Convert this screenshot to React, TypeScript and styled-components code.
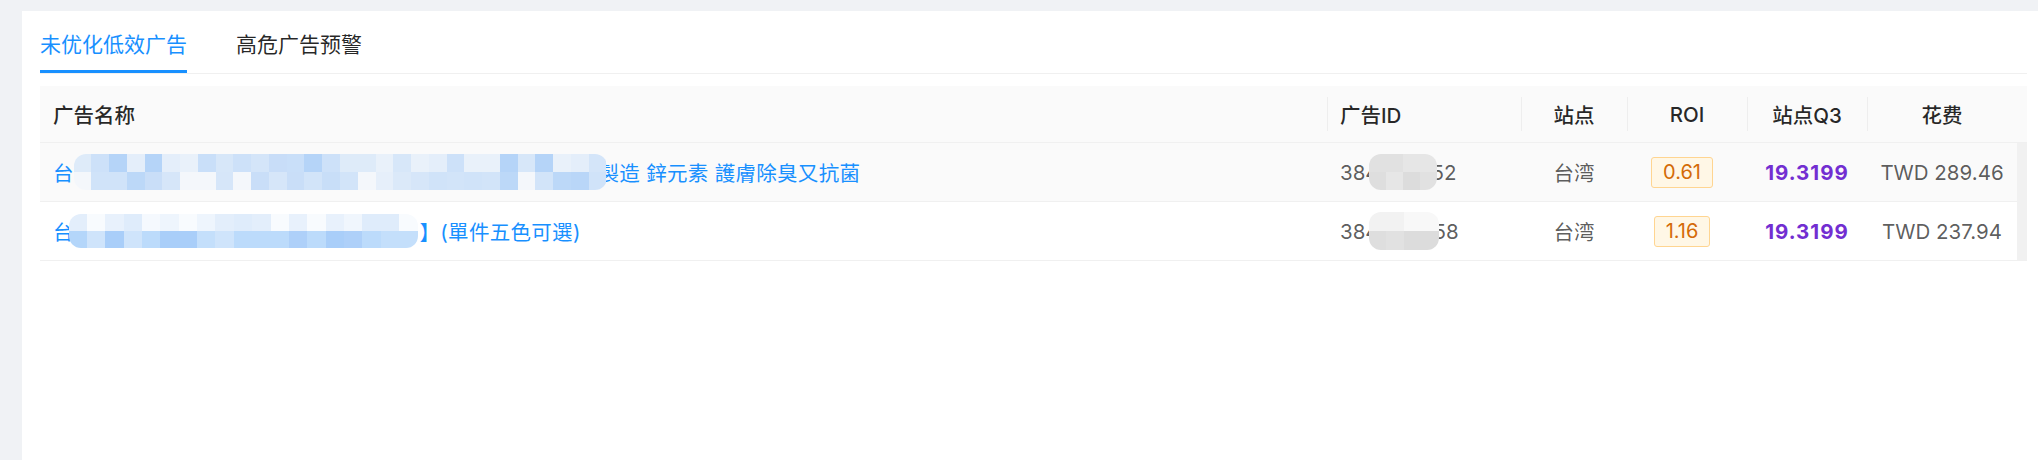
import styled, { createGlobalStyle } from 'styled-components';

const GlobalStyle = createGlobalStyle`
  html, body {
    margin: 0;
    padding: 0;
    background: #f0f2f5;
  }
  body {
    font-family: "Inter", "Noto Sans CJK SC", "Noto Sans CJK TC", sans-serif;
    -webkit-font-smoothing: antialiased;
  }
`;

const GRID = '1287px 194px 106px 120px 120px 150px';

const BLUE_TOP = ['#b5d4f8', '#c9dff9', '#cde1f9', '#e4eefa', '#deebf9', '#b0d0f8', '#c8ddf8', '#d4e5f9', '#e9f1fa', '#d7e7f9'];
const BLUE_BOTTOM = ['#d0e3f9', '#d2e4f9', '#bcd8f8', '#d6e6f9', '#c9def8', '#e6effa', '#f4f7fb', '#c8def8', '#b9d6f8', '#dbe9f9'];
const BLUE_LIGHT = ['#e3eefb', '#eef5fd', '#f5f9fe', '#e8f1fc', '#f0f6fd', '#dfecfb', '#f8fbfe'];
const BLUE_DARK = ['#a9cef9', '#bcdbfb', '#cfe4fb', '#b4d6fa', '#c4dffb', '#e0eefc', '#aed0f9'];
const GRAY_MID = ['#dcdcdc', '#e1e1e1', '#e6e6e6', '#dedede'];
const GRAY_LIGHT = ['#f2f2f2', '#f6f6f6', '#efefef', '#f8f8f8'];

type Row = {
  prefix: string;
  nameBlur: { width: number; height: number; before: number; after: number; top: string[]; bottom: string[]; seed: number };
  suffix: string;
  idHead: string;
  idTail: string;
  idBlur: { width: number; height: number; top: string[]; bottom: string[]; seed: number };
  site: string;
  roi: string;
  q3: string;
  spend: string;
  shaded: boolean;
};

const rows: Row[] = [
  {
    prefix: '台',
    nameBlur: { width: 533, height: 36, before: 0, after: -8, top: BLUE_TOP, bottom: BLUE_BOTTOM, seed: 3 },
    suffix: '製造 鋅元素 護膚除臭又抗菌',
    idHead: '384',
    idTail: '52',
    idBlur: { width: 68, height: 36, top: GRAY_MID, bottom: GRAY_MID, seed: 1 },
    site: '台湾',
    roi: '0.61',
    q3: '19.3199',
    spend: 'TWD 289.46',
    shaded: true,
  },
  {
    prefix: '台',
    nameBlur: { width: 349, height: 34, before: -5, after: 2, top: BLUE_LIGHT, bottom: BLUE_DARK, seed: 7 },
    suffix: '】(單件五色可選)',
    idHead: '384',
    idTail: '58',
    idBlur: { width: 70, height: 38, top: GRAY_LIGHT, bottom: GRAY_MID, seed: 5 },
    site: '台湾',
    roi: '1.16',
    q3: '19.3199',
    spend: 'TWD 237.94',
    shaded: false,
  },
];

function pick(list: string[], i: number, seed: number) {
  const n = Math.abs(Math.sin((i + 1) * 12.9898 + seed * 78.233) * 43758.5453);
  return list[Math.floor((n - Math.floor(n)) * list.length)];
}

function Blur({
  width,
  height,
  top,
  bottom,
  seed,
  before = 0,
  after = 0,
}: {
  width: number;
  height: number;
  top: string[];
  bottom: string[];
  seed: number;
  before?: number;
  after?: number;
}) {
  const cols = Math.max(1, Math.round(width / 18));
  const tiles = [];
  for (let i = 0; i < cols; i++) tiles.push(<Tile key={'t' + i} $color={pick(top, i, seed)} />);
  for (let i = 0; i < cols; i++) tiles.push(<Tile key={'b' + i} $color={pick(bottom, i + 40, seed)} />);
  return (
    <MosaicBox $width={width} $height={height} $cols={cols} $before={before} $after={after}>
      {tiles}
    </MosaicBox>
  );
}

export default function App() {
  return (
    <>
      <GlobalStyle />
      <Page>
        <Card>
          <TabList>
            <Tab $active>未优化低效广告</Tab>
            <Tab>高危广告预警</Tab>
          </TabList>
          <Table>
            <HeaderRow>
              <HeaderCell>广告名称</HeaderCell>
              <HeaderCell $divider>广告ID</HeaderCell>
              <HeaderCell $divider $center>站点</HeaderCell>
              <HeaderCell $divider $center>ROI</HeaderCell>
              <HeaderCell $divider $center>站点Q3</HeaderCell>
              <HeaderCell $divider $center>花费</HeaderCell>
              <HeaderGutter />
            </HeaderRow>
            <Body>
              <Rows>
                {rows.map((r, i) => (
                  <DataRow key={i} $shaded={r.shaded}>
                    <Cell>
                      <NameLink>
                        {r.prefix}
                        <Blur {...r.nameBlur} />
                        <Suffix>{r.suffix}</Suffix>
                      </NameLink>
                    </Cell>
                    <Cell>
                      <IdText>
                        {r.idHead}
                        <Blur {...r.idBlur} before={-10} after={-5} />
                        {r.idTail}
                      </IdText>
                    </Cell>
                    <Cell $center>{r.site}</Cell>
                    <Cell $center>
                      <RoiTag>{r.roi}</RoiTag>
                    </Cell>
                    <Cell $center>
                      <Q3Value>{r.q3}</Q3Value>
                    </Cell>
                    <Cell $center>{r.spend}</Cell>
                  </DataRow>
                ))}
              </Rows>
              <ScrollTrack />
            </Body>
          </Table>
        </Card>
      </Page>
    </>
  );
}

const Page = styled.div`
  min-height: 460px;
  padding: 11px 0 0 22px;
  box-sizing: border-box;
  display: flex;
`;

const Card = styled.section`
  flex: 1;
  min-height: 449px;
  background: #ffffff;
  padding: 18px 11px 0 18px;
  box-sizing: border-box;
`;

const TabList = styled.div`
  display: flex;
  gap: 49px;
  border-bottom: 1px solid #f0f0f0;
  height: 44px;
`;

const Tab = styled.div<{ $active?: boolean }>`
  font-size: 21px;
  line-height: 31px;
  padding-bottom: 11px;
  border-bottom: 3px solid ${({ $active }) => ($active ? '#1890ff' : 'transparent')};
  color: ${({ $active }) => ($active ? '#1890ff' : 'rgba(0, 0, 0, 0.85)')};
  white-space: nowrap;
  cursor: pointer;
`;

const Table = styled.div`
  margin-top: 12px;
  font-size: 20.5px;
  color: rgba(0, 0, 0, 0.65);
`;

const HeaderRow = styled.div`
  display: grid;
  grid-template-columns: ${GRID} 10px;
  height: 56px;
  background: #fafafa;
  border-bottom: 1px solid #f0f0f0;
`;

const HeaderCell = styled.div<{ $divider?: boolean; $center?: boolean }>`
  position: relative;
  display: flex;
  align-items: center;
  justify-content: ${({ $center }) => ($center ? 'center' : 'flex-start')};
  padding: 0 13px;
  font-weight: 500;
  color: rgba(0, 0, 0, 0.85);
  white-space: nowrap;

  &::before {
    content: '';
    display: ${({ $divider }) => ($divider ? 'block' : 'none')};
    position: absolute;
    left: 0;
    top: 50%;
    transform: translateY(-50%);
    width: 1px;
    height: 34px;
    background: #eeeeee;
  }
`;

const HeaderGutter = styled.div``;

const Body = styled.div`
  display: grid;
  grid-template-columns: 1fr 10px;
`;

const Rows = styled.div`
  display: flex;
  flex-direction: column;
`;

const DataRow = styled.div<{ $shaded: boolean }>`
  display: grid;
  grid-template-columns: ${GRID};
  height: 58px;
  border-bottom: 1px solid #f0f0f0;
  background: ${({ $shaded }) => ($shaded ? '#fafafa' : '#ffffff')};
`;

const Cell = styled.div<{ $center?: boolean }>`
  display: flex;
  align-items: center;
  justify-content: ${({ $center }) => ($center ? 'center' : 'flex-start')};
  padding: 0 13px;
  white-space: nowrap;
`;

const NameLink = styled.a`
  display: inline-flex;
  align-items: center;
  color: #1890ff;
  white-space: pre;
  cursor: pointer;
`;

const Suffix = styled.span`
  letter-spacing: 0.3px;
`;

const IdText = styled.span`
  display: inline-flex;
  align-items: center;
  white-space: pre;
`;

const MosaicBox = styled.span<{ $width: number; $height: number; $cols: number; $before: number; $after: number }>`
  position: relative;
  z-index: 1;
  display: inline-grid;
  grid-template-columns: repeat(${({ $cols }) => $cols}, 1fr);
  grid-template-rows: 1fr 1fr;
  width: ${({ $width }) => $width}px;
  height: ${({ $height }) => $height}px;
  margin-left: ${({ $before }) => $before}px;
  margin-right: ${({ $after }) => $after}px;
  border-radius: 12px;
  overflow: hidden;
  flex-shrink: 0;
`;

const Tile = styled.span<{ $color: string }>`
  background: ${({ $color }) => $color};
`;

const RoiTag = styled.span`
  display: inline-block;
  margin-right: 10px;
  padding: 0 11px;
  line-height: 29px;
  font-size: 20px;
  color: #d46b08;
  background: #fff7e6;
  border: 1px solid #ffd591;
  border-radius: 3px;
`;

const Q3Value = styled.span`
  color: #722ed1;
  font-weight: 700;
  letter-spacing: 1px;
`;

const ScrollTrack = styled.div`
  background: #f1f1f1;
  border-bottom: 1px solid #f0f0f0;
`;
